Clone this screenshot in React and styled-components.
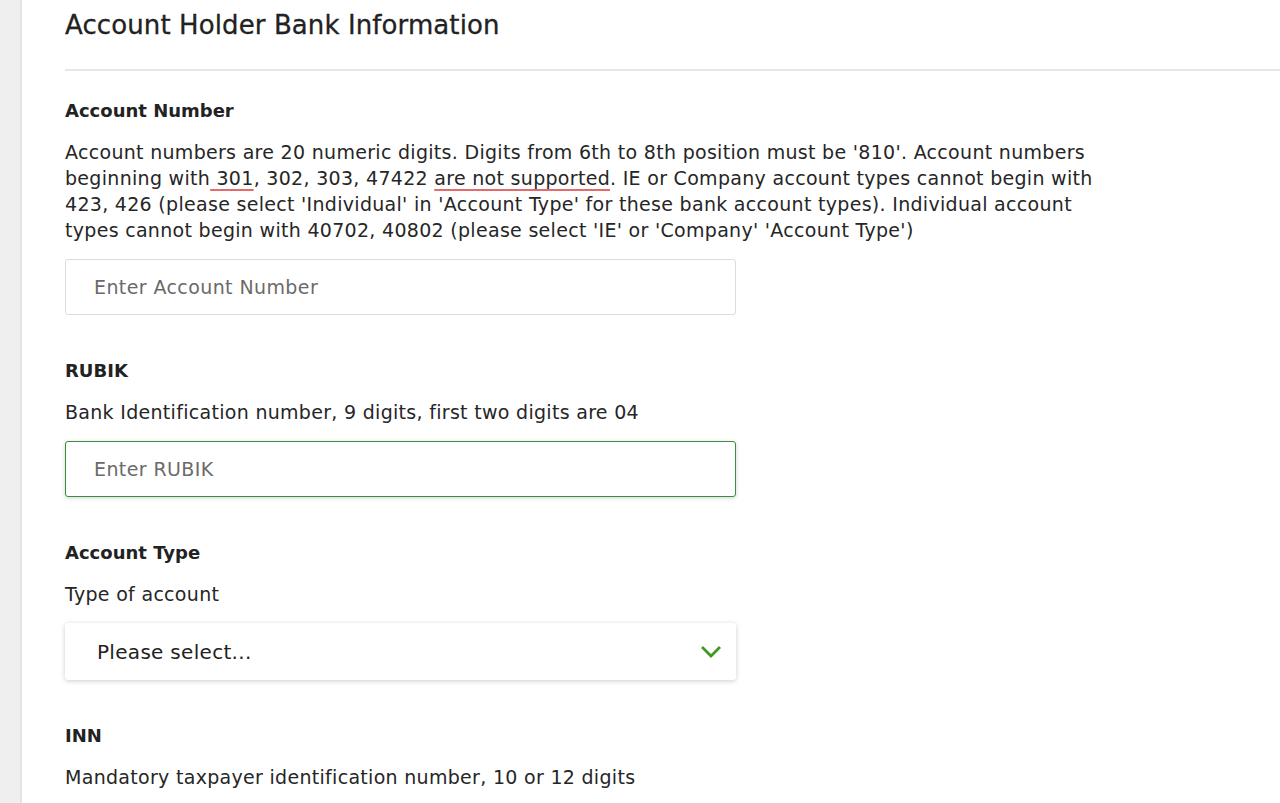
import React from "react";
import styled, { createGlobalStyle } from "styled-components";

const Global = createGlobalStyle`
  html, body { margin: 0; padding: 0; background: #ffffff; }
  body { font-family: "DejaVu Sans", "Liberation Sans", sans-serif; color: #232323; }
  * { box-sizing: border-box; }
`;

const Page = styled.div`
  display: flex;
  min-height: 803px;
  overflow: hidden;
`;

const Sidebar = styled.aside`
  width: 22px;
  flex: none;
  background: #efefef;
  border-right: 2px solid #e3e3e3;
`;

const Main = styled.main`
  flex: 1;
  padding-left: 43px;
`;

const Header = styled.header`
  padding-top: 9px;
  height: 71px;
  border-bottom: 2px solid #e6e6e6;
`;

const Title = styled.h1`
  margin: 0;
  font-size: 26px;
  line-height: 32px;
  font-weight: 400;
  letter-spacing: 0.1px;
  color: #222;
  -webkit-text-stroke: 0.3px #222;
`;

const Form = styled.div`
  padding-top: 28px;
  width: 1120px;
`;

const Field = styled.section`
  margin-bottom: 44px;
`;

const Label = styled.h2`
  margin: 0 0 16px;
  font-size: 18px;
  line-height: 24px;
  font-weight: 700;
  letter-spacing: 0;
  color: #222;
`;

const Hint = styled.p`
  margin: 0 0 16px;
  font-size: 19px;
  line-height: 26px;
  letter-spacing: 0.3px;
  color: #262626;
`;

const Flagged = styled.span`
  text-decoration: underline;
  text-decoration-color: #e46b6b;
  text-decoration-thickness: 2px;
  text-underline-offset: 4px;
`;

const Input = styled.input`
  display: block;
  width: 671px;
  height: 56px;
  padding: 0 28px;
  border: 1px solid ${(p) => (p.$active ? "#3b8e3b" : "#dcdcdc")};
  border-radius: 3px;
  box-shadow: ${(p) => (p.$active ? "0 1px 4px rgba(0,0,0,0.18)" : "none")};
  font-family: inherit;
  font-size: 19px;
  letter-spacing: 0.4px;
  color: #222;
  background: #fff;
  outline: none;
  &::placeholder { color: #6a6a6a; }
`;

const Select = styled.div`
  width: 671px;
  height: 57px;
  padding: 0 15px 0 32px;
  display: flex;
  align-items: center;
  justify-content: space-between;
  border-radius: 3px;
  background: #fff;
  box-shadow: 0 1px 5px rgba(0,0,0,0.2);
  font-size: 20px;
  letter-spacing: 0.3px;
  color: #222;
`;

const Chevron = () => (
  <svg width="20" height="14" viewBox="0 0 20 14" fill="none">
    <path d="M2 3 L10 11 L18 3" stroke="#3f9a1f" strokeWidth="2.8" strokeLinecap="square" />
  </svg>
);

export default function App() {
  return (
    <>
      <Global />
      <Page>
        <Sidebar />
        <Main>
          <Header>
            <Title>Account Holder Bank Information</Title>
          </Header>
          <Form>
            <Field>
              <Label>Account Number</Label>
              <Hint>
                Account numbers are 20 numeric digits. Digits from 6th to 8th position must be '810'. Account numbers
                <br />
                beginning with<Flagged> 301</Flagged>, 302, 303, 47422 <Flagged>are not supported</Flagged>. IE or Company account types cannot begin with
                <br />
                423, 426 (please select 'Individual' in 'Account Type' for these bank account types). Individual account
                <br />
                types cannot begin with 40702, 40802 (please select 'IE' or 'Company' 'Account Type')
              </Hint>
              <Input placeholder="Enter Account Number" />
            </Field>
            <Field>
              <Label>RUBIK</Label>
              <Hint>Bank Identification number, 9 digits, first two digits are 04</Hint>
              <Input $active placeholder="Enter RUBIK" />
            </Field>
            <Field>
              <Label>Account Type</Label>
              <Hint>Type of account</Hint>
              <Select>
                <span>Please select...</span>
                <Chevron />
              </Select>
            </Field>
            <Field>
              <Label>INN</Label>
              <Hint>Mandatory taxpayer identification number, 10 or 12 digits</Hint>
            </Field>
          </Form>
        </Main>
      </Page>
    </>
  );
}
